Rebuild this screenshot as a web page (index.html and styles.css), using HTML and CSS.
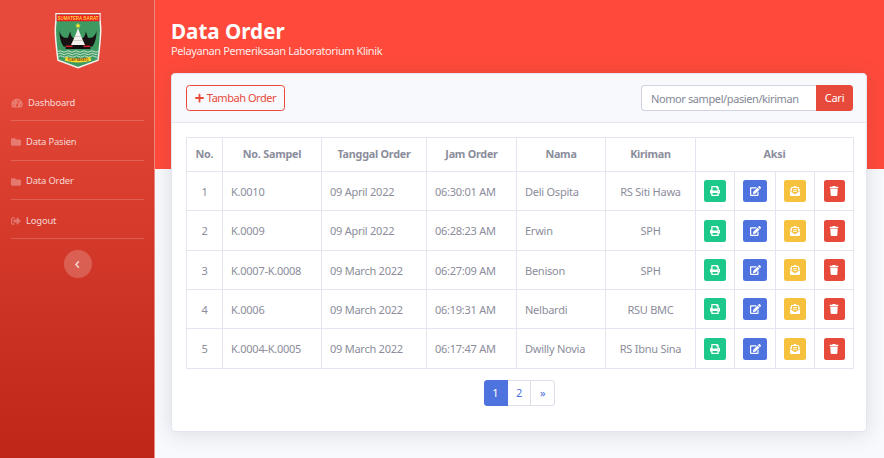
FILE: index.html
```html
<!DOCTYPE html>
<html lang="id">
<head>
<meta charset="utf-8">
<title>Data Order</title>
<link rel="stylesheet" href="styles.css">
</head>
<body>
<svg class="sprite" aria-hidden="true">
  <symbol id="dash" viewBox="0 0 576 512"><path d="M288 32C128.94 32 0 160.94 0 320c0 52.8 14.25 102.26 39.06 144.8 5.61 9.62 16.3 15.2 27.44 15.2h443c11.14 0 21.83-5.58 27.44-15.2C561.75 422.26 576 372.8 576 320c0-159.06-128.94-288-288-288zm0 64c14.71 0 26.58 10.13 30.32 23.65-1.11 2.26-2.64 4.23-3.45 6.67l-9.22 27.67c-5.13 3.49-10.97 6.01-17.64 6.01-17.67 0-32-14.33-32-32S270.33 96 288 96zM96 384c-17.67 0-32-14.33-32-32s14.33-32 32-32 32 14.33 32 32-14.33 32-32 32zm48-160c-17.67 0-32-14.33-32-32s14.33-32 32-32 32 14.33 32 32-14.33 32-32 32zm246.77-72.41l-61.33 184C343.13 347.33 352 364.54 352 384c0 11.72-3.38 22.55-8.88 32H232.88c-5.5-9.45-8.88-20.28-8.88-32 0-33.94 26.5-61.43 59.9-63.59l61.34-184.01c4.17-12.56 17.73-19.45 30.36-15.17 12.57 4.19 19.35 17.79 15.17 30.36zm14.66 57.2l15.52-46.55c3.47-1.29 7.13-2.23 11.05-2.23 17.67 0 32 14.33 32 32s-14.33 32-32 32c-11.38-.01-20.89-6.28-26.57-15.22zM480 384c-17.67 0-32-14.33-32-32s14.33-32 32-32 32 14.33 32 32-14.33 32-32 32z"/></symbol>
  <symbol id="folder" viewBox="0 0 512 512"><path d="M464 128H272l-64-64H48C21.49 64 0 85.49 0 112v288c0 26.51 21.49 48 48 48h416c26.51 0 48-21.49 48-48V176c0-26.51-21.49-48-48-48z"/></symbol>
  <symbol id="logout" viewBox="0 0 512 512"><path d="M497 273L329 441c-15 15-41 4.5-41-17v-96H152c-13.3 0-24-10.7-24-24v-96c0-13.3 10.7-24 24-24h136V88c0-21.4 25.9-32 41-17l168 168c9.3 9.4 9.3 24.6 0 34zM192 436v-40c0-6.600-5.400-12-12-12H96c-17.700 0-32-14.300-32-32V160c0-17.700 14.300-32 32-32h84c6.600 0 12-5.400 12-12V76c0-6.600-5.400-12-12-12H96c-53 0-96 43-96 96v192c0 53 43 96 96 96h84c6.600 0 12-5.400 12-12z"/></symbol>
  <symbol id="print" viewBox="0 0 512 512"><path d="M448 192V77.25c0-8.49-3.37-16.62-9.37-22.63L393.37 9.37c-6-6-14.14-9.37-22.63-9.37H96C78.33 0 64 14.33 64 32v160c-35.35 0-64 28.65-64 64v112c0 8.84 7.16 16 16 16h48v96c0 17.67 14.33 32 32 32h320c17.67 0 32-14.33 32-32v-96h48c8.84 0 16-7.16 16-16V256c0-35.35-28.65-64-64-64zm-64 256H128v-96h256v96zm0-224H128V64h192v48c0 8.84 7.16 16 16 16h48v96zm48 72c-13.25 0-24-10.75-24-24 0-13.26 10.75-24 24-24s24 10.74 24 24c0 13.25-10.75 24-24 24z"/></symbol>
  <symbol id="edit" viewBox="0 0 576 512"><path d="M402.600 83.200l90.200 90.200c3.800 3.800 3.800 10 0 13.800L274.400 405.600l-92.800 10.300c-12.400 1.400-22.900-9.100-21.500-21.500l10.300-92.800L388.800 83.200c3.800-3.800 10-3.800 13.800 0zm162-22.900l-48.800-48.800c-15.200-15.200-39.900-15.200-55.200 0l-35.400 35.400c-3.800 3.800-3.800 10 0 13.800l90.200 90.200c3.800 3.800 10 3.800 13.800 0l35.400-35.400c15.200-15.300 15.200-40 0-55.200zM384 346.200V448H64V128h229.800c3.200 0 6.200-1.300 8.500-3.500l40-40c7.600-7.600 2.200-20.500-8.500-20.500H48C21.500 64 0 85.500 0 112v352c0 26.500 21.500 48 48 48h352c26.500 0 48-21.500 48-48V306.200c0-10.700-12.900-16-20.500-8.500l-40 40c-2.200 2.300-3.500 5.300-3.500 8.500z"/></symbol>
  <symbol id="mail" viewBox="0 0 512 512"><path d="M176 216h160c8.840 0 16-7.160 16-16v-16c0-8.840-7.160-16-16-16H176c-8.840 0-16 7.160-16 16v16c0 8.840 7.160 16 16 16zm-16 80c0 8.840 7.160 16 16 16h160c8.840 0 16-7.160 16-16v-16c0-8.840-7.160-16-16-16H176c-8.840 0-16 7.160-16 16v16zm96 121.130c-16.420 0-32.840-5.060-46.860-15.190L0 250.860V464c0 26.510 21.490 48 48 48h416c26.510 0 48-21.490 48-48V250.860L302.860 401.940c-14.020 10.120-30.440 15.190-46.860 15.190zm237.610-254.180c-8.850-6.940-17.240-13.470-29.610-22.810V96c0-26.510-21.490-48-48-48h-77.550c-3.040-2.200-5.870-4.260-9.040-6.560C312.600 29.170 279.200-.35 256 0c-23.200-.35-56.590 29.170-73.410 41.440-3.170 2.300-6 4.360-9.040 6.560H96c-26.510 0-48 21.490-48 48v44.140c-12.370 9.330-20.760 15.870-29.610 22.810A47.995 47.995 0 0 0 0 200.720v10.650l96 69.350V96h320v184.720l96-69.350v-10.650c0-14.740-6.780-28.670-18.390-37.770z"/></symbol>
  <symbol id="trash" viewBox="0 0 448 512"><path d="M432 32H312l-9.400-18.700A24 24 0 0 0 281.100 0H166.800a23.720 23.720 0 0 0-21.400 13.300L136 32H16A16 16 0 0 0 0 48v32a16 16 0 0 0 16 16h416a16 16 0 0 0 16-16V48a16 16 0 0 0-16-16zM53.200 467a48 48 0 0 0 47.900 45h245.800a48 48 0 0 0 47.900-45L416 128H32z"/></symbol>
  <symbol id="plus" viewBox="0 0 448 512"><path d="M416 208H272V64c0-17.670-14.330-32-32-32h-32c-17.670 0-32 14.330-32 32v144H32c-17.670 0-32 14.330-32 32v32c0 17.670 14.330 32 32 32h144v144c0 17.670 14.330 32 32 32h32c17.670 0 32-14.330 32-32V304h144c17.670 0 32-14.330 32-32v-32c0-17.670-14.330-32-32-32z"/></symbol>
</svg>
<div class="layout">
  <aside class="sidebar">
    <svg class="logo" viewBox="0 0 48 56">
      <path d="M2 .8h44c-.6 5 .7 10 .7 16-.1 10-1.400 20-2.700 30.500L24 54.800 4 47.300C2.700 37 1.300 27 1.300 17 1.300 11 2.600 6 2 .8z" fill="#3f9a62" stroke="#f6efec" stroke-width="1.500"/>
      <path d="M2.500 1.500h43l-.2 6.800H2.700z" fill="#ee1c23"/>
      <text class="logo-title" x="24" y="6.700" textLength="41" lengthAdjust="spacingAndGlyphs">SUMATERA BARAT</text>
      <path d="M24 9.800l.8 2h2l-1.600 1.300.6 2-1.800-1.200-1.800 1.200.6-2-1.600-1.300h2z" fill="#ffe534"/>
      <path d="M5.500 17.500c1 5.500 4 8 8.500 7.200.6-2 1.500-4.500 2.300-6.200.2 4 1.700 6.500 4.200 7h7c2.500-.5 4-3 4.200-7 .8 1.700 1.700 4.200 2.300 6.200 4.500.8 7.500-1.700 8.500-7.200.2 6-1 11.500-4 16H9.500c-3-4.500-4.200-10-4-16z" fill="#171313"/>
      <path d="M24 15l1.600 4.500 1.600 4 1.800 4 2 4.500H17l2-4.500 1.800-4 1.600-4z" fill="#f4f2ee"/>
      <path d="M20.800 23.500h6.400M19 27.500h10" stroke="#b7b7b0" stroke-width=".6"/>
      <path d="M11.500 32h25v4h-25z" fill="#211313"/>
      <path d="M12 33.300h24" stroke="#d4212a" stroke-width="1.400"/>
      <path d="M19 32h10l1.200 4H17.800z" fill="#101010"/>
      <path d="M4 38.500q2-1.500 4 0t4 0 4 0 4 0 4 0 4 0 4 0 4 0 4 0 4 0M4.300 41q2-1.500 4 0t4 0 4 0 4 0 4 0 4 0 4 0 4 0 4 0 3 0M4.700 43.500q2-1.500 4 0t4 0 4 0 4 0 4 0 4 0 4 0 4 0 4 0 2.500 0" fill="none" stroke="#c9e5d1" stroke-width="1"/>
      <path d="M11.800 44q12 3.500 24.400 0l1 3.800q-13 3.500-26.400 0z" fill="#fbdd2c"/>
      <text class="logo-motto" x="24" y="48.300" textLength="21" lengthAdjust="spacingAndGlyphs">TUAH SAKATO</text>
    </svg>
    <nav class="menu">
      <a class="menu-item"><svg class="menu-icon wide"><use href="#dash"/></svg><span>Dashboard</span></a>
      <a class="menu-item"><svg class="menu-icon"><use href="#folder"/></svg><span>Data Pasien</span></a>
      <a class="menu-item"><svg class="menu-icon"><use href="#folder"/></svg><span>Data Order</span></a>
      <a class="menu-item"><svg class="menu-icon"><use href="#logout"/></svg><span>Logout</span></a>
    </nav>
    <button class="toggle"><svg viewBox="0 0 8 8"><path d="M5.200 1.200L2.600 4l2.600 2.800" fill="none" stroke="currentColor" stroke-width="1.400"/></svg></button>
  </aside>
  <main class="content">
    <header class="heading"><h1><span>Data Order</span></h1><p><span>Pelayanan Pemeriksaan Laboratorium Klinik</span></p></header>
    <section class="card">
      <div class="card-head">
        <button class="add"><svg><use href="#plus"/></svg><span>Tambah Order</span></button>
        <div class="search"><input placeholder="Nomor sampel/pasien/kiriman"><button>Cari</button></div>
      </div>
      <div class="card-body">
        <table>
          <colgroup><col class="c1"><col class="c2"><col class="c3"><col class="c4"><col class="c5"><col class="c6"><col class="c7"><col class="c8"><col class="c9"><col class="c10"></colgroup>
          <thead><tr><th>No.</th><th>No. Sampel</th><th>Tanggal Order</th><th>Jam Order</th><th>Nama</th><th>Kiriman</th><th colspan="4">Aksi</th></tr></thead>
          <tbody>
            <tr><td class="mid">1</td><td>K.0010</td><td>09 April 2022</td><td>06:30:01 AM</td><td>Deli Ospita</td><td class="mid">RS Siti Hawa</td><td class="act"><a class="btn green"><svg><use href="#print"/></svg></a></td><td class="act"><a class="btn blue"><svg><use href="#edit"/></svg></a></td><td class="act"><a class="btn yellow"><svg><use href="#mail"/></svg></a></td><td class="act"><a class="btn red"><svg><use href="#trash"/></svg></a></td></tr>
            <tr class="tall"><td class="mid">2</td><td>K.0009</td><td>09 April 2022</td><td>06:28:23 AM</td><td>Erwin</td><td class="mid">SPH</td><td class="act"><a class="btn green"><svg><use href="#print"/></svg></a></td><td class="act"><a class="btn blue"><svg><use href="#edit"/></svg></a></td><td class="act"><a class="btn yellow"><svg><use href="#mail"/></svg></a></td><td class="act"><a class="btn red"><svg><use href="#trash"/></svg></a></td></tr>
            <tr><td class="mid">3</td><td>K.0007-K.0008</td><td>09 March 2022</td><td>06:27:09 AM</td><td>Benison</td><td class="mid">SPH</td><td class="act"><a class="btn green"><svg><use href="#print"/></svg></a></td><td class="act"><a class="btn blue"><svg><use href="#edit"/></svg></a></td><td class="act"><a class="btn yellow"><svg><use href="#mail"/></svg></a></td><td class="act"><a class="btn red"><svg><use href="#trash"/></svg></a></td></tr>
            <tr><td class="mid">4</td><td>K.0006</td><td>09 March 2022</td><td>06:19:31 AM</td><td>Nelbardi</td><td class="mid">RSU BMC</td><td class="act"><a class="btn green"><svg><use href="#print"/></svg></a></td><td class="act"><a class="btn blue"><svg><use href="#edit"/></svg></a></td><td class="act"><a class="btn yellow"><svg><use href="#mail"/></svg></a></td><td class="act"><a class="btn red"><svg><use href="#trash"/></svg></a></td></tr>
            <tr class="tall"><td class="mid">5</td><td>K.0004-K.0005</td><td>09 March 2022</td><td>06:17:47 AM</td><td>Dwilly Novia</td><td class="mid">RS Ibnu Sina</td><td class="act"><a class="btn green"><svg><use href="#print"/></svg></a></td><td class="act"><a class="btn blue"><svg><use href="#edit"/></svg></a></td><td class="act"><a class="btn yellow"><svg><use href="#mail"/></svg></a></td><td class="act"><a class="btn red"><svg><use href="#trash"/></svg></a></td></tr>
          </tbody>
        </table>
        <div class="pages"><a class="current">1</a><a>2</a><a>»</a></div>
      </div>
    </section>
  </main>
</div>
</body>
</html>
```
FILE: styles.css
```css
* { box-sizing: border-box; }
body { margin: 0; font: 11px/16.5px "Noto Sans", "Open Sans", sans-serif; letter-spacing: -0.25px; color: #8b8d9b; overflow: hidden; }
button, input { font: inherit; letter-spacing: inherit; margin: 0; }
.sprite { position: absolute; width: 0; height: 0; }
.layout { display: flex; width: 884px; height: 458px; }

.sidebar { flex: none; width: 155px; padding: 13px 10px 0 11px; background: linear-gradient(180deg, #e74a3b 10%, #be2617 100%); border-right: 1px solid #ec8980; display: flex; flex-direction: column; align-items: center; }
.logo { width: 48px; height: 56px; margin-bottom: 13px; flex: none; }
.logo-title { font: bold 4.6px "Liberation Sans", sans-serif; letter-spacing: 0; fill: #ffd23a; text-anchor: middle; }
.logo-motto { font: bold 3.4px "Liberation Sans", sans-serif; letter-spacing: 0; fill: #8a3b12; text-anchor: middle; }
.menu { width: 100%; }
.menu-item { display: flex; align-items: center; height: 39.3px; padding-top: 4px; border-bottom: 1px solid rgba(255, 255, 255, .18); font-size: 9.4px; letter-spacing: -0.15px; color: rgba(255, 255, 255, .8); }
.menu-icon { width: 10px; height: 10px; margin-right: 5px; fill: rgba(255, 255, 255, .3); }
.menu-icon.wide { width: 12px; }
.toggle { width: 28px; height: 28px; margin-top: 11px; padding: 0; border: 0; border-radius: 50%; background: rgba(255, 255, 255, .2); color: rgba(255, 255, 255, .7); display: grid; place-items: center; }
.toggle svg { width: 9px; height: 9px; }

.content { flex: 1; min-width: 0; padding: 0 17px 0 16px; background: linear-gradient(#ff4a3b 169px, #f8f9fc 169px); }
.heading { height: 73px; padding-top: 20px; color: #fff; }
.heading h1 { margin: 0; font-size: 20.6px; line-height: 23px; letter-spacing: 0; font-weight: 700; }
.heading p { margin: 0; line-height: 16px; letter-spacing: -0.41px; color: rgba(255, 255, 255, .9); }
.card { height: 359px; border: 1px solid #e3e6f0; border-radius: 4px; background: #fff; box-shadow: 0 2px 20px rgba(58, 59, 69, .15); }
.card-head { display: flex; justify-content: space-between; align-items: center; height: 49px; padding: 0 13px 0 14px; background: #f8f9fc; border-bottom: 1px solid #e3e6f0; border-radius: 4px 4px 0 0; }
.add { display: flex; align-items: center; justify-content: center; width: 99px; height: 26px; padding: 0; border: 1px solid #e74a3b; border-radius: 3.5px; background: transparent; color: #e74a3b; letter-spacing: -0.45px; }
.add svg { width: 9px; height: 10px; margin-right: 3px; fill: currentColor; }
.search { display: flex; width: 212px; height: 26px; }
.search input { width: 175px; height: 26px; padding: 0 8px 0 9px; border: 1px solid #d1d3e2; border-right: 0; border-radius: 3.5px 0 0 3.5px; background: #fff; letter-spacing: -0.4px; }
.search input::placeholder { color: #858796; opacity: 1; }
.search button { width: 37px; padding: 0; border: 0; border-radius: 0 3.5px 3.5px 0; background: #e74a3b; color: #fff; }

.card-body { padding: 14px 13px 0 14px; }
table { width: 667px; table-layout: fixed; border-collapse: collapse; }
.c1 { width: 36px; }
.c2 { width: 99px; }
.c3 { width: 105px; }
.c4 { width: 90px; }
.c5 { width: 89px; }
.c6 { width: 90px; }
.c7 { width: 39px; }
.c8 { width: 41px; }
.c9 { width: 39px; }
.c10 { width: 39px; }
th, td { border: 1px solid #e3e6f0; padding: 0 0 0 8px; white-space: nowrap; text-align: left; vertical-align: middle; }
th { height: 34px; padding: 0; text-align: center; font-weight: 700; font-size: 10.8px; }
td { height: 39px; padding-top: 2px; }
.tall td { height: 40px; }
td.mid { padding-left: 0; text-align: center; }
td.act { padding: 0; }
.btn { display: grid; place-items: center; width: 22px; height: 22px; margin: 0 auto; border-radius: 2.5px; }
.btn svg { width: 10px; height: 10px; fill: #fff; }
.btn.green { background: #1cc88a; }
.btn.blue { width: 24px; background: #4e73df; }
.btn.blue svg { width: 11px; }
.btn.yellow { background: #f6c23e; }
.btn.red { width: 21px; background: #e74a3b; }

.pages { display: flex; width: 71px; height: 26px; margin: 11px auto 0; }
.pages a { flex: 1; display: grid; place-items: center; border: 1px solid #dddfeb; border-left: 0; color: #4e73df; background: #fff; }
.pages .current { background: #4e73df; border-color: #4e73df; color: #fff; border-radius: 3.5px 0 0 3.5px; }
.pages a:last-child { border-radius: 0 3.5px 3.5px 0; }
```
